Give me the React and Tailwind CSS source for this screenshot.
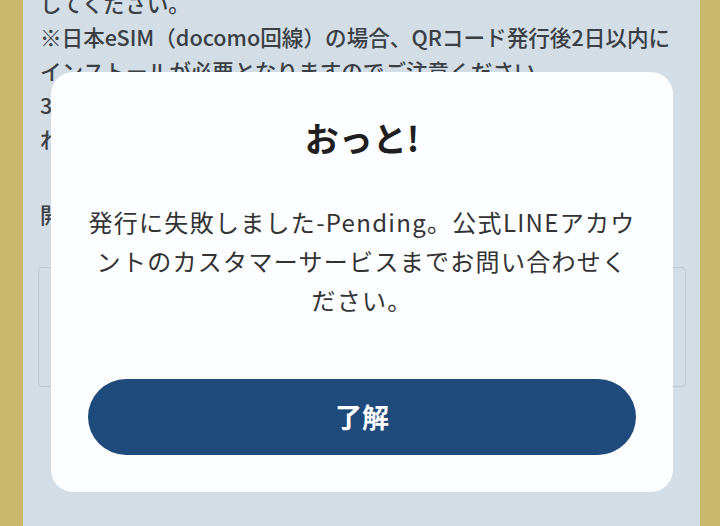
import React from 'react';

const bgLines = [
  'してください。',
  '※日本eSIM（docomo回線）の場合、QRコード発行後2日以内に',
  'インストールが必要となりますのでご注意ください。',
  '3日以内にインストールされない場合、QRコードは無効とな',
  'れますので、お早めに手続きをお願いいたします。',
];

export default function App() {
  return (
    <div className="relative flex h-[526px] w-[720px] overflow-hidden bg-[#c9b86b] font-['Noto_Sans_CJK_JP','Noto_Sans',sans-serif]">
      {/* page behind the dialog */}
      <div className="ml-[23px] mr-[20px] flex-1 bg-[#d2dde5] pl-[17px] pr-[14px] text-[21.6px] font-medium text-[#3a3f45]">
        <div className="-mt-[14px]">
          {bgLines.map((line, i) => (
            <p key={i} className="whitespace-nowrap leading-[34px]">{line}</p>
          ))}
        </div>
        <p className="mt-[41px] whitespace-nowrap leading-[34px]">開通手順について</p>
        <div className="-ml-[2px] mt-[36px] h-[120px] rounded-[4px] border border-[#bcc6ce]"></div>
      </div>

      {/* dialog */}
      <div className="absolute left-[51px] top-[72px] flex h-[420px] w-[622px] flex-col rounded-[22px] bg-[#fcfdfe] px-[37px] pt-[42px]">
        <h2 className="text-center text-[34px] font-bold leading-[48px] text-[#1f1f1f]">おっと!</h2>
        <p className="mt-[40px] whitespace-nowrap text-center text-[24px] leading-[39px] tracking-[1.3px] text-[#333333]">
          発行に失敗しました-Pending。公式LINEアカウ
          <br />
          ントのカスタマーサービスまでお問い合わせく
          <br />
          ださい。
        </p>
        <button className="mt-[60px] h-[76px] w-full rounded-full bg-[#1e4a7c] text-[27px] font-bold text-white">
          了解
        </button>
      </div>
    </div>
  );
}
